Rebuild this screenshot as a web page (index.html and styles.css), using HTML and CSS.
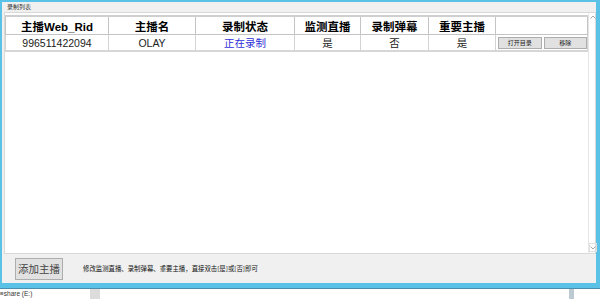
FILE: index.html
```html
<!DOCTYPE html>
<html lang="zh-CN">
<head>
    <meta charset="UTF-8">
    <title>录制列表</title>
    <link rel="stylesheet" href="styles.css">
</head>
<body>
<div class="window">
    <div class="group-title">录制列表</div>
    <div class="list">
        <div class="list-body">
            <table class="grid">
                <colgroup>
                    <col class="c1"><col class="c2"><col class="c3"><col class="c4"><col class="c5"><col class="c6"><col class="c7">
                </colgroup>
                <tr class="head">
                    <th>主播Web_Rid</th>
                    <th>主播名</th>
                    <th>录制状态</th>
                    <th>监测直播</th>
                    <th>录制弹幕</th>
                    <th>重要主播</th>
                    <th></th>
                </tr>
                <tr class="row">
                    <td>996511422094</td>
                    <td>OLAY</td>
                    <td class="status">正在录制</td>
                    <td>是</td>
                    <td>否</td>
                    <td>是</td>
                    <td class="ops">
                        <div class="ops-wrap">
                            <button class="small-btn">打开目录</button>
                            <button class="small-btn">移除</button>
                        </div>
                    </td>
                </tr>
            </table>
        </div>
        <div class="vscroll">
            <div class="arrow up">
                <svg width="6" height="4" viewBox="0 0 6 4"><path d="M0.5 3.5 L3 1 L5.5 3.5" fill="none" stroke="#a8a8a8" stroke-width="1"/></svg>
            </div>
            <div class="track"></div>
            <div class="arrow down">
                <svg width="6" height="4" viewBox="0 0 6 4"><path d="M0.5 0.5 L3 3 L5.5 0.5" fill="none" stroke="#a8a8a8" stroke-width="1"/></svg>
            </div>
        </div>
    </div>
    <div class="footer">
        <button class="add-btn">添加主播</button>
        <span class="hint">修改监测直播、录制弹幕、重要主播，直接双击[是]或[否]即可</span>
    </div>
</div>
<div class="taskbar">
    <span class="drive">≡share (E:)</span>
    <span class="block"></span>
    <span class="bar"></span>
</div>
</body>
</html>
```
FILE: styles.css
```css
body {
    margin: 0px;
    padding: 0px;
    width: 600px;
    height: 299px;
    overflow: hidden;
    background: #ffffff;
    font-family: "Liberation Sans", "Noto Sans CJK SC", sans-serif;
}

.window {
    height: 288px;
    box-sizing: border-box;
    background: #f0f0f0;
    border-top: 2px solid #5bc2e7;
    border-left: 2px solid #5bc2e7;
    border-right: 4px solid #5bc2e7;
    border-bottom: 5px solid #5bc2e7;
    box-shadow: 0 1px 0 #4a8fae;
    display: flex;
    flex-direction: column;
}

.group-title {
    height: 10px;
    line-height: 11px;
    padding-left: 5px;
    font-size: 6px;
    color: #333;
}

.list {
    height: 242px;
    margin-left: 2px;
    box-sizing: border-box;
    background: #ffffff;
    border: 1px solid #d9d9d9;
    display: flex;
}

.list-body {
    flex: 1;
    padding-top: 2px;
}

.grid {
    width: 582px;
    table-layout: fixed;
    border-collapse: collapse;
    border-bottom: 2px solid #d6d6d6;
}

.c1 { width: 103px; }
.c2 { width: 87px; }
.c3 { width: 99px; }
.c4 { width: 66px; }
.c5 { width: 68px; }
.c6 { width: 67px; }
.c7 { width: 92px; }

.grid th, .grid td {
    padding: 0;
    text-align: center;
    border: 1px solid #c4c4c4;
    white-space: nowrap;
}

.grid .head th {
    height: 17px;
    font-size: 11.5px;
    font-weight: bold;
    color: #000;
    border-width: 2px 1px 1px 1px;
    border-color: #cfcfcf #c4c4c4 #c4c4c4 #c4c4c4;
}

.grid .row td {
    height: 15px;
    font-size: 10.5px;
    color: #222;
    border-color: #d4d4d4;
}

.grid .row .status {
    color: #2f2fd8;
}

.grid .row .ops {
    padding: 0;
}

.ops-wrap {
    display: flex;
    gap: 2px;
    padding: 1px 0 0 2px;
}

.small-btn {
    width: 44px;
    height: 12px;
    margin: 0;
    padding: 0;
    font-family: "Noto Sans CJK SC", sans-serif;
    font-size: 6px;
    line-height: 10px;
    color: #222;
    background: #e1e1e1;
    border: 1px solid #adadad;
}

.vscroll {
    width: 8px;
    display: flex;
    flex-direction: column;
    border-left: 1px solid #e6e6e6;
}

.arrow {
    height: 7px;
    display: flex;
    align-items: center;
    justify-content: center;
}

.arrow.down {
    border: 1px solid #e0e0e0;
    margin-bottom: 1px;
}

.track {
    flex: 1;
}

.footer {
    flex: 1;
    display: flex;
    align-items: center;
    padding-left: 13px;
    gap: 20px;
}

.add-btn {
    width: 48px;
    height: 22px;
    margin: 0;
    padding: 0;
    font-family: "Noto Sans CJK SC", sans-serif;
    font-size: 10.5px;
    color: #444;
    background: #e1e1e1;
    border: 1px solid #adadad;
}

.hint {
    font-family: "Noto Sans CJK SC", sans-serif;
    font-size: 6.4px;
    color: #111;
}

.taskbar {
    height: 11px;
    position: relative;
    font-size: 6.5px;
    line-height: 11px;
    color: #333;
}

.taskbar .block {
    position: absolute;
    left: 90px;
    top: 1px;
    width: 10px;
    height: 10px;
    background: #dcdcdc;
}

.taskbar .bar {
    position: absolute;
    left: 569px;
    top: 1px;
    width: 5px;
    height: 10px;
    background: #bccbd2;
}
```
